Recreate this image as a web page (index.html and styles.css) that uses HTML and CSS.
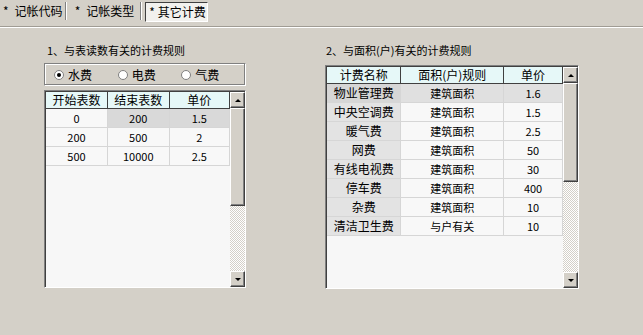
FILE: index.html
```html
<!DOCTYPE html>
<html lang="zh">
<head>
    <meta charset="UTF-8">
    <title>其它计费</title>
    <link rel="stylesheet" href="styles.css">
</head>
<body>
    <div class="tabs">
        <div class="tab"><span class="star">*</span>记帐代码</div>
        <div class="tab"><span class="star">*</span>记帐类型</div>
        <div class="tab active"><span class="star">*</span>其它计费</div>
    </div>
    <div class="panel">
        <!-- 与表读数有关 -->
        <section class="group left">
            <p class="caption">1、与表读数有关的计费规则</p>
            <div class="radios">
                <label class="radio"><span class="dot on"></span>水费</label>
                <label class="radio"><span class="dot"></span>电费</label>
                <label class="radio"><span class="dot"></span>气费</label>
            </div>
            <div class="grid grid-left">
                <div class="grid-body">
                    <table>
                        <colgroup><col style="width:62px"><col style="width:62px"><col style="width:61px"></colgroup>
                        <tr><th>开始表数</th><th>结束表数</th><th>单价</th></tr>
                        <tr><td>0</td><td class="sel">200</td><td class="sel">1.5</td></tr>
                        <tr><td>200</td><td>500</td><td>2</td></tr>
                        <tr><td>500</td><td>10000</td><td>2.5</td></tr>
                    </table>
                </div>
                <div class="scrollbar">
                    <div class="sb-btn up"></div>
                    <div class="sb-track"><div class="sb-thumb thumb-left"></div></div>
                    <div class="sb-btn down"></div>
                </div>
            </div>
        </section>

        <!-- 与面积有关 -->
        <section class="group right">
            <p class="caption">2、与面积(户)有关的计费规则</p>
            <div class="grid grid-right">
                <div class="grid-body">
                    <table>
                        <colgroup><col style="width:74px"><col style="width:103px"><col style="width:59px"></colgroup>
                        <tr><th>计费名称</th><th>面积(户)规则</th><th>单价</th></tr>
                        <tr class="row-sel"><td class="name">物业管理费</td><td>建筑面积</td><td>1.6</td></tr>
                        <tr><td class="name">中央空调费</td><td>建筑面积</td><td>1.5</td></tr>
                        <tr><td class="name">暖气费</td><td>建筑面积</td><td>2.5</td></tr>
                        <tr><td class="name">网费</td><td>建筑面积</td><td>50</td></tr>
                        <tr><td class="name">有线电视费</td><td>建筑面积</td><td>30</td></tr>
                        <tr><td class="name">停车费</td><td>建筑面积</td><td>400</td></tr>
                        <tr><td class="name">杂费</td><td>建筑面积</td><td>10</td></tr>
                        <tr><td class="name">清洁卫生费</td><td>与户有关</td><td>10</td></tr>
                    </table>
                </div>
                <div class="scrollbar">
                    <div class="sb-btn up"></div>
                    <div class="sb-track"><div class="sb-thumb thumb-right"></div></div>
                    <div class="sb-btn down"></div>
                </div>
            </div>
        </section>
    </div>
</body>
</html>
```

FILE: styles.css
```css
body {
    margin: 0;
    width: 643px;
    height: 335px;
    background-color: #d4d0c8;
    font-family: "Noto Sans CJK SC", "DejaVu Sans", sans-serif;
    font-size: 12px;
    color: #000;
    overflow: hidden;
}
.tabs {
    display: flex;
    height: 27px;
    box-sizing: border-box;
    padding-top: 2px;
    border-bottom: 1px solid #a09c94;
}
.tab {
    height: 18px;
    line-height: 18px;
    padding: 0 2px 0 3px;
    margin-right: 1px;
    border-right: 1px solid #808080;
    box-shadow: 1px 0 0 #fff;
    font-size: 12px;
}
.tab + .tab {
    padding: 0 6px 0 8px;
    margin-right: 3px;
}
.star {
    margin-right: 6px;
}
.tab.active {
    margin-left: 1px;
    padding: 0 1px 0 3px;
    background: #f2f1ee;
    border: 1px solid #fff;
    border-top-color: #404040;
    border-left-color: #404040;
    box-shadow: none;
}
.tab.active .star {
    margin-right: 3px;
}
.panel {
    display: flex;
    border-top: 1px solid #fff;
    padding: 16px 0 0 44px;
    gap: 79px;
}
.group {
    display: flex;
    flex-direction: column;
}
.caption {
    margin: 0 0 0 3px;
    height: 13px;
    line-height: 13px;
    font-size: 11px;
}
.left .caption {
    margin-bottom: 6px;
}
.right .caption {
    margin-bottom: 8px;
    margin-left: 1px;
}
.radios {
    display: flex;
    width: 202px;
    height: 23px;
    box-sizing: border-box;
    align-items: center;
    padding-left: 9px;
    border: 1px solid #808080;
    border-right-color: #fff;
    border-bottom-color: #fff;
    box-shadow: inset -1px -1px 0 #808080, inset 1px 1px 0 #fff;
    margin-bottom: 4px;
}
.radio {
    display: flex;
    align-items: center;
    width: 64px;
    font-size: 12px;
}
.dot {
    width: 10px;
    height: 10px;
    border-radius: 50%;
    background: #fff;
    border: 1px solid #808080;
    margin-right: 4px;
    position: relative;
    box-sizing: border-box;
}
.dot.on::after {
    content: "";
    position: absolute;
    left: 2px;
    top: 2px;
    width: 4px;
    height: 4px;
    border-radius: 50%;
    background: #000;
}
.grid {
    display: flex;
    box-sizing: border-box;
    border: 1px solid #808080;
    border-right-color: #fff;
    border-bottom-color: #fff;
    box-shadow: inset 1px 1px 0 #404040;
    padding: 1px 0 0 1px;
    background: #f7f7f7;
}
.grid-left {
    width: 202px;
    height: 198px;
}
.grid-right {
    width: 254px;
    height: 224px;
}
.grid-body {
    flex: 1;
    overflow: hidden;
}
table {
    border-collapse: collapse;
    table-layout: fixed;
}
th {
    height: 16px;
    padding: 0;
    font-weight: normal;
    font-size: 12px;
    background: #e6f8f8;
    border-right: 1px solid #404040;
    border-bottom: 1px solid #404040;
    line-height: 16px;
}
td {
    height: 18px;
    padding: 0;
    text-align: center;
    font-size: 11px;
    line-height: 18px;
    background: #f8f8f8;
    border-right: 1px solid #d6d6d6;
    border-bottom: 1px solid #d6d6d6;
}
td.sel {
    background: #d9d9d9;
}
td.name {
    background: #e3e3e3;
    font-size: 12px;
}
.row-sel td {
    background: #e0e0e0;
}
.row-sel td.name {
    background: #d6d6d6;
}
.scrollbar {
    width: 15px;
    display: flex;
    flex-direction: column;
}
.sb-btn {
    height: 16px;
    box-sizing: border-box;
    background: #d4d0c8;
    border: 1px solid #fff;
    border-right-color: #404040;
    border-bottom-color: #404040;
    box-shadow: inset -1px -1px 0 #808080;
    display: flex;
    justify-content: center;
    align-items: center;
}
.sb-btn::after {
    content: "";
    width: 0;
    height: 0;
    border-left: 3px solid transparent;
    border-right: 3px solid transparent;
}
.sb-btn.up::after {
    border-bottom: 3px solid #000;
}
.sb-btn.down::after {
    border-top: 3px solid #000;
}
.sb-track {
    flex: 1;
    background: repeating-conic-gradient(#fff 0 25%, #d4d0c8 0 50%) 0 0 / 2px 2px;
}
.sb-thumb {
    box-sizing: border-box;
    background: #d4d0c8;
    border: 1px solid #fff;
    border-right-color: #404040;
    border-bottom-color: #404040;
    box-shadow: inset -1px -1px 0 #808080;
}
.thumb-left {
    height: 98px;
}
.thumb-right {
    height: 99px;
}
```
